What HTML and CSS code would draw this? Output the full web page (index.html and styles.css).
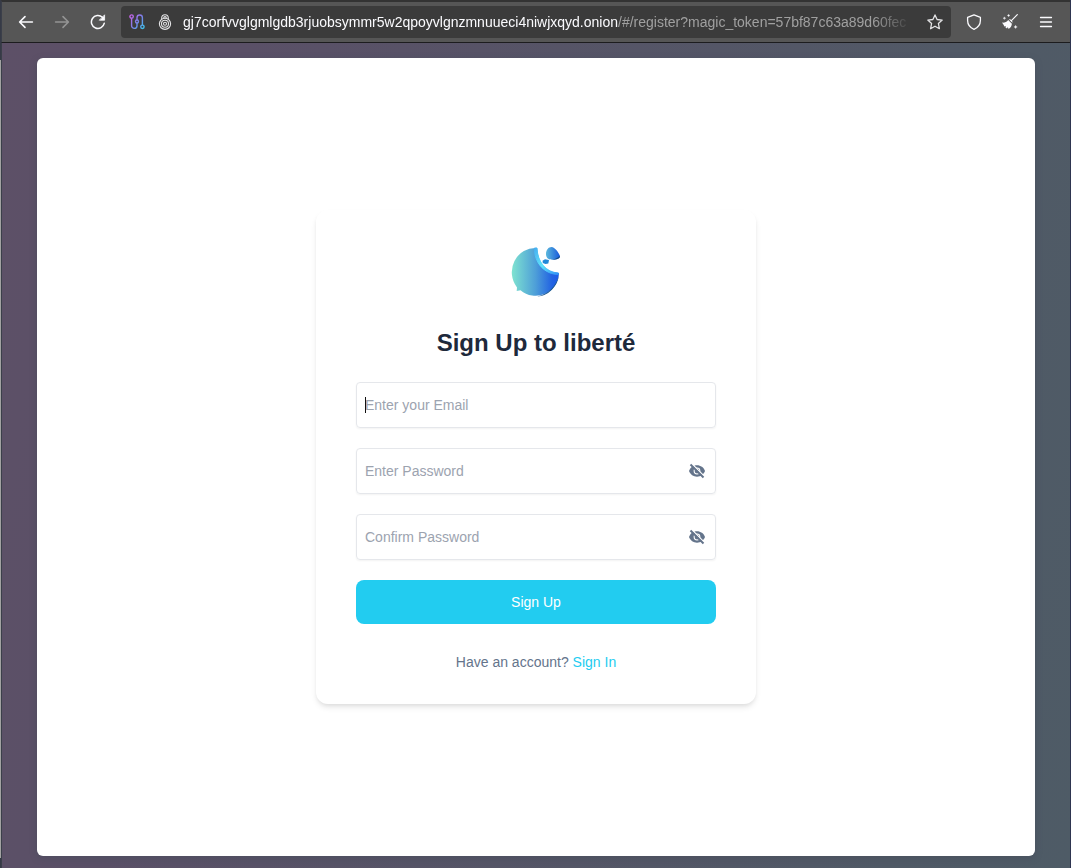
FILE: index.html
```html
<!DOCTYPE html>
<html lang="en">
<head>
    <meta charset="UTF-8">
    <meta name="viewport" content="width=device-width, initial-scale=1.0">
    <title>Sign Up to liberté</title>
    <link rel="stylesheet" href="styles.css">
</head>
<body>
    <header class="toolbar">
        <button class="tool" type="button" aria-label="Back">
            <svg width="16" height="16" viewBox="0 0 16 16" fill="none" stroke="currentColor" stroke-width="1.6" stroke-linecap="round" stroke-linejoin="round"><path d="M14.4 8H1.8M7 2.6 1.6 8 7 13.4"/></svg>
        </button>
        <button class="tool" type="button" aria-label="Forward" disabled>
            <svg width="16" height="16" viewBox="0 0 16 16" fill="none" stroke="currentColor" stroke-width="1.6" stroke-linecap="round" stroke-linejoin="round"><path d="M1.6 8h12.6M9 2.6 14.4 8 9 13.4"/></svg>
        </button>
        <button class="tool" type="button" aria-label="Reload">
            <svg width="16" height="16" viewBox="0 0 16 16" fill="none" stroke="currentColor" stroke-width="1.5" stroke-linecap="round"><path d="M14.3 9.2A6.5 6.5 0 1 1 12.4 3.3"/><path d="M14.6 1.2v5H9.6z" fill="currentColor" stroke-width="0.8" stroke-linejoin="round"/></svg>
        </button>
        <div class="address">
            <button class="addr-icon" type="button" aria-label="Tor circuit">
                <svg width="16" height="16" viewBox="0 0 16 16" fill="none" stroke="url(#circuit)" stroke-width="1.4">
                    <defs><linearGradient id="circuit" gradientUnits="userSpaceOnUse" x1="1" y1="2" x2="15" y2="14"><stop offset="0" stop-color="#c763e8"/><stop offset="0.5" stop-color="#7b7fe8"/><stop offset="1" stop-color="#3fc4ee"/></linearGradient></defs>
                    <circle cx="2.6" cy="2.6" r="1.7"/>
                    <circle cx="13.4" cy="12.8" r="1.7"/>
                    <circle cx="8" cy="7.5" r="1.5"/>
                    <path d="M2.6 4.3v7.4a2.7 2.7 0 0 0 5.4 0V9M8 6V3.7a2.7 2.7 0 0 1 5.4 0v7.4"/>
                </svg>
            </button>
            <button class="addr-icon" type="button" aria-label="Onion site">
                <svg width="16" height="16" viewBox="0 0 16 16" fill="none" stroke="currentColor" stroke-width="1.1">
                    <circle cx="8" cy="9.8" r="5.6"/>
                    <circle cx="8" cy="9.8" r="3.5"/>
                    <circle cx="8" cy="9.8" r="1.5"/>
                    <path d="M4.7 5.4V4a3.3 3.3 0 0 1 6.6 0v1.4M6.7 4.3V3.9a1.3 1.3 0 0 1 2.6 0v.4"/>
                </svg>
            </button>
            <div class="url"><span class="domain">gj7corfvvglgmlgdb3rjuobsymmr5w2qpoyvlgnzmnuueci4niwjxqyd.onion</span>/#/register?magic_token=57bf87c63a89d60fec</div>
            <button class="addr-icon" type="button" aria-label="Bookmark this page">
                <svg width="16" height="16" viewBox="0 0 16 16" fill="none" stroke="currentColor" stroke-width="1.3" stroke-linejoin="round"><path d="m8 .9 2.1 4.6 5.1.6-3.8 3.4 1 5.2L8 12.2l-4.4 2.5 1-5.2L.8 6.1l5.1-.6z"/></svg>
            </button>
        </div>
        <button class="tool" type="button" aria-label="Security level">
            <svg width="16" height="16" viewBox="0 0 16 16" fill="none" stroke="currentColor" stroke-width="1.3" stroke-linejoin="round"><path d="m8 .8 6.4 2.5v3.2c0 3.8-2.2 7-6.4 8.8C3.8 13.5 1.6 10.3 1.6 6.5V3.3z"/></svg>
        </button>
        <button class="tool" type="button" aria-label="New identity">
            <svg width="16" height="16" viewBox="0 0 16 16" fill="currentColor"><path d="M15.3.7 9.4 6.6" stroke="currentColor" stroke-width="1.2" stroke-linecap="round"/><path d="M7 5.4c1-.2 1.900.1 2.600.8.7.7 1 1.600.8 2.600z"/><path d="m6.200 6 3.700 3.700c-.3 2.400-1.500 4.200-3.300 5.300l-.8-1.900-.8 1.400-1.500-1 .3-1.600-1.500.5-.6-1.500L0 8.600c2.600.3 4.700-.6 6.200-2.600z"/><path d="m2.400 2.800.4 1 1 .4-1 .4-.4 1-.4-1-1-.4 1-.4zM6.600.2l.4.9.9.4-.9.4-.4.9-.4-.9-.9-.4.9-.4zM13.600 11.200l.5 1.200 1.200.5-1.200.5-.5 1.200-.5-1.200-1.200-.5 1.200-.5z" stroke="currentColor" stroke-width="0.3"/></svg>
        </button>
        <button class="tool" type="button" aria-label="Menu">
            <svg width="16" height="16" viewBox="0 0 16 16" fill="none" stroke="currentColor" stroke-width="1.3" stroke-linecap="round"><path d="M2.5 3.5h11M2.5 8h11M2.5 12.5h11"/></svg>
        </button>
    </header>

    <main class="page">
        <div class="panel">
            <form class="card">
                <svg class="logo" width="60" height="60" viewBox="0 0 60 60" role="img" aria-label="liberté logo">
                    <defs>
                        <linearGradient id="moon" x1="0" y1="0" x2="1" y2="0"><stop offset="0" stop-color="#7fe3d0"/><stop offset="0.5" stop-color="#4e9fd8"/><stop offset="0.85" stop-color="#2263e2"/><stop offset="1" stop-color="#1d5be8"/></linearGradient>
                        <linearGradient id="rim" x1="0" y1="0" x2="1" y2="1"><stop offset="0" stop-color="#45aef0"/><stop offset="0.5" stop-color="#62e5fb"/><stop offset="1" stop-color="#2d8df5"/></linearGradient>
                        <linearGradient id="drop" x1="0" y1="0" x2="1" y2="0"><stop offset="0" stop-color="#5bb8dc"/><stop offset="1" stop-color="#1759dc"/></linearGradient>
                    </defs>
                    <path d="M31 6A23.500 24.300 0 0 0 11 45.500L10.700 49l3.800-.8A23.500 24.300 0 0 0 53 31C41.500 31.500 31.500 21 31 6z" fill="url(#moon)"/>
                    <path d="M31 54.500A23.500 24.300 0 0 0 53 32.500C50.500 44 42 52.500 31 54.500z" fill="#16568f"/>
                    <path d="M28.500 6H31c.5 14 9 24.500 21.500 25v1.500C39 32.500 28 21 28.500 6z" fill="url(#rim)" stroke="url(#rim)"/>
                    <path d="M40 12.500c-.2-4.500 2.500-7.500 5.500-7.500 3.500.5 6.500 4.500 8.500 9 .2 2.500-3.500 3.700-7.500 3.700-4 0-6.300-1.700-6.500-5.200z" fill="url(#drop)"/>
                    <path d="M46.500 17.700c4 0 7.700-1.200 7.500-3.700-2 1.500-4 2.900-7.500 3.700z" fill="#164e86"/>
                    <path d="m36.500 18.800 2.500-1.600 4 .9-.7 3.400-2.800.6-2.700-1z" fill="#2189d8"/>
                </svg>
                <h1>Sign Up to liberté</h1>
                <div class="field caret">
                    <input type="email" aria-label="Email" placeholder="Enter your Email">
                </div>
                <div class="field">
                    <input type="password" aria-label="Password" placeholder="Enter Password">
                    <button class="eye" type="button" aria-label="Show password">
                        <svg width="16" height="16" viewBox="0 0 16 16"><path d="M0 8c1.300-3.500 4.300-5.700 8-5.700S14.700 4.500 16 8c-1.300 3.500-4.300 5.700-8 5.700S1.300 11.500 0 8z" fill="currentColor"/><circle cx="8" cy="8" r="3.400" fill="#fff"/><circle cx="8" cy="8" r="2.400" fill="currentColor"/><path d="m2.400.4 12.800 12.800" stroke="#fff" stroke-width="1.400"/><path d="m1.500 1.500 13 13" stroke="currentColor" stroke-width="2"/></svg>
                    </button>
                </div>
                <div class="field">
                    <input type="password" aria-label="Confirm password" placeholder="Confirm Password">
                    <button class="eye" type="button" aria-label="Show password confirmation">
                        <svg width="16" height="16" viewBox="0 0 16 16"><path d="M0 8c1.300-3.500 4.300-5.700 8-5.700S14.700 4.500 16 8c-1.300 3.500-4.300 5.700-8 5.700S1.300 11.500 0 8z" fill="currentColor"/><circle cx="8" cy="8" r="3.400" fill="#fff"/><circle cx="8" cy="8" r="2.400" fill="currentColor"/><path d="m2.400.4 12.800 12.800" stroke="#fff" stroke-width="1.400"/><path d="m1.500 1.500 13 13" stroke="currentColor" stroke-width="2"/></svg>
                    </button>
                </div>
                <button class="submit" type="submit">Sign Up</button>
                <p class="switch">Have an account? <a href="#/login">Sign In</a></p>
            </form>
        </div>
    </main>
</body>
</html>
```
FILE: styles.css
```css
* {
    box-sizing: border-box;
}
body {
    margin: 0;
    min-height: 100vh;
    padding-left: 1px;
    display: flex;
    flex-direction: column;
    font-family: "Liberation Sans", Arial, sans-serif;
    font-size: 14px;
    line-height: 20px;
    background: linear-gradient(#363a46 60px, #a2a2a2 60px, #a2a2a2 calc(100% - 10px), #363a46 calc(100% - 10px));
    border-right: 1px solid #2e3550;
}
button {
    font: inherit;
    color: inherit;
    border: none;
    background: none;
    padding: 0;
    cursor: pointer;
}
svg {
    display: block;
}

/* browser toolbar */
.toolbar {
    display: flex;
    align-items: center;
    height: 43px;
    padding: 0 6px;
    background-color: #565656;
    border-top: 2px solid #333;
    border-bottom: 1px solid #1c1c1e;
    border-left: 1px solid #3b3f4a;
    color: #fbfbfe;
}
.tool {
    width: 36px;
    height: 32px;
    display: flex;
    flex-shrink: 0;
    align-items: center;
    justify-content: center;
}
.tool:disabled {
    color: #949494;
}
.address {
    flex: 1;
    min-width: 0;
    height: 32px;
    margin: 0 5px;
    padding: 0 8px;
    display: flex;
    align-items: center;
    gap: 12px;
    background-color: #3b3b3b;
    border-radius: 4px;
}
.addr-icon {
    flex-shrink: 0;
    color: #e4e4e6;
}
.url {
    flex: 1;
    min-width: 0;
    margin: 0 -8px 0 -2px;
    overflow: hidden;
    white-space: nowrap;
    color: #a0a0a0;
    -webkit-mask-image: linear-gradient(to left, transparent 10px, #000 50px);
    mask-image: linear-gradient(to left, transparent 10px, #000 50px);
}
.domain {
    color: #fbfbfe;
}

/* page */
.page {
    flex: 1;
    display: flex;
    padding: 15px 35px 12px;
    border-left: 1px solid #3b3f4a;
    background: linear-gradient(100deg, #5d5067 0%, #5a5067 20%, #505a66 85%, #4e5b66 100%);
}
.panel {
    flex: 1;
    display: flex;
    align-items: center;
    justify-content: center;
    background-color: #fff;
    border-radius: 6px;
    box-shadow: 0 2px 6px rgba(70, 75, 90, 0.6);
}
.card {
    width: 100%;
    max-width: 440px;
    padding: 32px 40px;
    display: flex;
    flex-direction: column;
    gap: 20px;
    border-radius: 12px;
    box-shadow: 0 4px 6px -1px rgba(0, 0, 0, 0.1), 0 2px 4px -1px rgba(0, 0, 0, 0.06);
}
.logo {
    align-self: center;
}
h1 {
    margin: 5px 0 3px;
    font-size: 24px;
    line-height: 32px;
    text-align: center;
    color: #1e293b;
}
.field {
    position: relative;
    display: flex;
    align-items: center;
    height: 46px;
    padding: 0 8px;
    border: 1px solid #e5e7eb;
    border-radius: 4px;
    box-shadow: 0 1px 2px rgba(0, 0, 0, 0.05);
}
.field input {
    flex: 1;
    min-width: 0;
    padding: 0;
    border: none;
    outline: none;
    background: none;
    font: inherit;
    color: #1e293b;
}
.field input::placeholder {
    color: #9ca3af;
}
.caret::before {
    content: "";
    position: absolute;
    left: 8px;
    width: 1px;
    height: 16px;
    background-color: #111;
}
.eye {
    margin-right: 2px;
    color: #64748b;
}
.submit {
    height: 44px;
    border-radius: 8px;
    background-color: #22ccf0;
    color: #fff;
}
.switch {
    margin: 8px 0 0;
    text-align: center;
    color: #64748b;
}
.switch a {
    color: #22ccf0;
    text-decoration: none;
}
```
